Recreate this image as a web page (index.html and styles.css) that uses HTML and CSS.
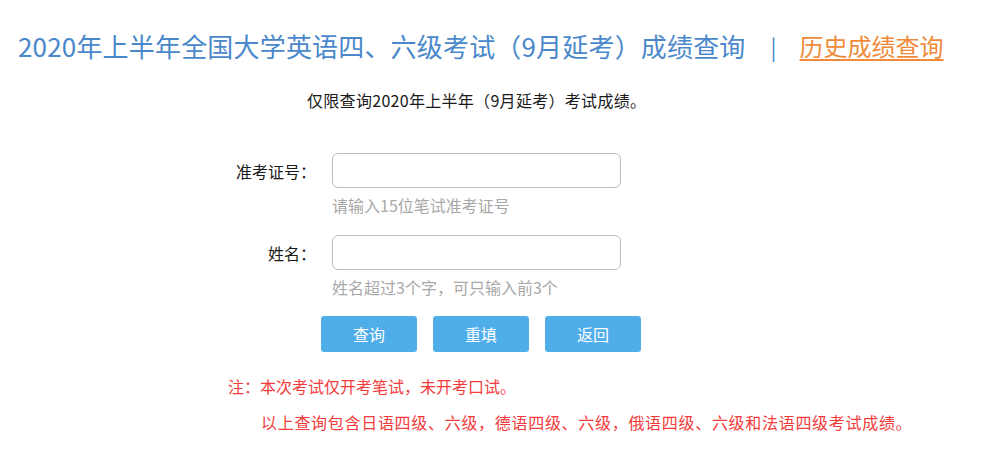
FILE: index.html
```html
<!DOCTYPE html>
<html lang="zh-CN">
<head>
<meta charset="utf-8">
<title>成绩查询</title>
<link rel="stylesheet" href="styles.css">
</head>
<body>
<div class="header">
  <h1 class="title">2020年上半年全国大学英语四、六级考试（9月延考）成绩查询</h1>
  <span class="sep">|</span>
  <a class="history" href="#">历史成绩查询</a>
</div>
<p class="subtitle">仅限查询2020年上半年（9月延考）考试成绩。</p>
<form class="form">
  <div class="row">
    <label class="label" for="zkz">准考证号：</label>
    <input class="input" id="zkz" type="text">
  </div>
  <div class="hint">请输入15位笔试准考证号</div>
  <div class="row row2">
    <label class="label" for="xm">姓名：</label>
    <input class="input" id="xm" type="text">
  </div>
  <div class="hint">姓名超过3个字，可只输入前3个</div>
  <div class="buttons">
    <button class="btn" type="button">查询</button>
    <button class="btn" type="button">重填</button>
    <button class="btn" type="button">返回</button>
  </div>
</form>
<div class="note">
  <p class="note-line">注：本次考试仅开考笔试，未开考口试。</p>
  <p class="note-line indent">以上查询包含日语四级、六级，德语四级、六级，俄语四级、六级和法语四级考试成绩。</p>
</div>
</body>
</html>
```
FILE: styles.css
```css
* { box-sizing: border-box; }
html, body {
  margin: 0;
  padding: 0;
  background: #fff;
}
body {
  font-family: "Noto Sans CJK SC", "Noto Sans", sans-serif;
  color: #1a1a1a;
  width: 1000px;
  height: 450px;
  overflow: hidden;
}
.header {
  display: flex;
  align-items: center;
  padding: 28px 0 0 18px;
  height: 64px;
}
.title {
  margin: 0;
  font-size: 26px;
  line-height: 36px;
  font-weight: normal;
  letter-spacing: 0.18px;
  color: #4a88cb;
}
.sep {
  margin-left: 25px;
  font-size: 22px;
  line-height: 36px;
  color: #4a88cb;
}
.history {
  margin-left: 23px;
  font-size: 24px;
  line-height: 36px;
  color: #f08a3a;
  text-decoration: underline;
  text-underline-offset: 3px;
}
.subtitle {
  margin: 24px 0 0 0;
  padding-left: 307px;
  font-size: 16px;
  line-height: 24px;
  letter-spacing: 0.3px;
  color: #1a1a1a;
}
.form {
  margin: 41px 0 0 0;
}
.row {
  display: flex;
  align-items: center;
}
.row2 { margin-top: 18px; }
.label {
  width: 316px;
  text-align: right;
  font-size: 16px;
  color: #1a1a1a;
}
.input {
  margin-left: 16px;
  width: 289px;
  height: 35px;
  border: 1px solid #bdbdbd;
  border-radius: 6px;
  background: #fff;
  font-size: 16px;
  padding: 0 8px;
}
.hint {
  margin-top: 5px;
  padding-left: 332px;
  font-size: 16px;
  line-height: 24px;
  color: #a8a8a8;
}
.buttons {
  display: flex;
  gap: 16px;
  margin-top: 17px;
  padding-left: 321px;
}
.btn {
  width: 96px;
  height: 36px;
  border: 0;
  border-radius: 3px;
  background: #4faeea;
  color: #fff;
  font-family: "Noto Sans CJK SC", "Noto Sans", sans-serif;
  font-size: 16px;
  padding: 0;
}
.note {
  margin-top: 16px;
  padding-left: 228px;
  color: #f23c3c;
  font-size: 16px;
}
.note-line {
  margin: 0;
  line-height: 36px;
}
.indent {
  padding-left: 33px;
  letter-spacing: 0.7px;
}
```
